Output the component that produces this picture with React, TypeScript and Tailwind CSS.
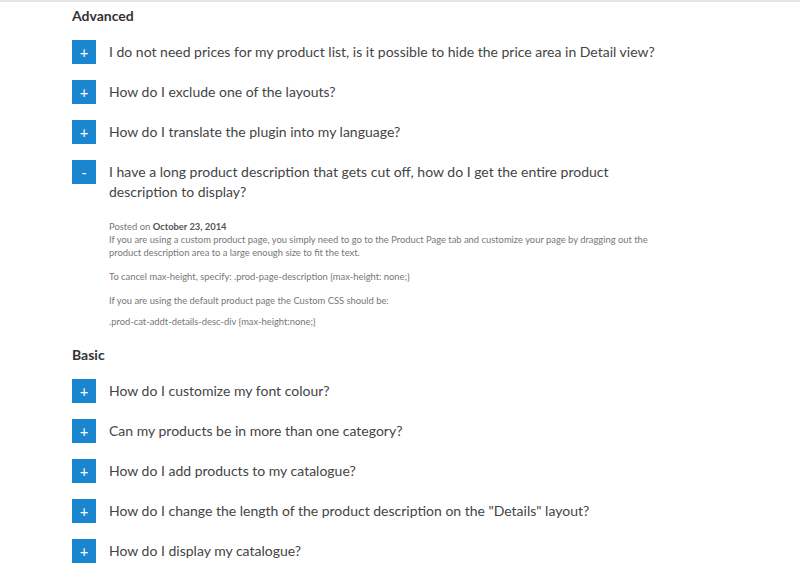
import { useState } from 'react'

type Faq = { q: string; open?: boolean }

const advanced: Faq[] = [
  { q: 'I do not need prices for my product list, is it possible to hide the price area in Detail view?' },
  { q: 'How do I exclude one of the layouts?' },
  { q: 'How do I translate the plugin into my language?' },
  {
    q: 'I have a long product description that gets cut off, how do I get the entire product description to display?',
    open: true,
  },
]

const basic: Faq[] = [
  { q: 'How do I customize my font colour?' },
  { q: 'Can my products be in more than one category?' },
  { q: 'How do I add products to my catalogue?' },
  { q: 'How do I change the length of the product description on the "Details" layout?' },
  { q: 'How do I display my catalogue?' },
]

export default function App() {
  return (
    <div className="min-h-[578px] border-t-2 border-[#e6e6e6] bg-white font-['Lato',sans-serif] text-[#444]">
      <div className="px-[72px] pt-[4px]">
        <h2 className="text-[14px] leading-[20px] font-bold text-[#333]">Advanced</h2>
        <FaqList items={advanced} />
        <h2 className="mt-[17px] text-[14px] leading-[20px] font-bold text-[#333]">Basic</h2>
        <FaqList items={basic} />
      </div>
    </div>
  )
}

const FaqList = ({ items }: { items: Faq[] }) => {
  return (
    <div className="mt-[14px] space-y-[16px]">
      {items.map((item) => (
        <FaqItem key={item.q} item={item} />
      ))}
    </div>
  )
}

const FaqItem = ({ item }: { item: Faq }) => {
  const [open, setOpen] = useState(!!item.open)
  return (
    <div>
      <button className="flex items-start gap-[13px] text-left" onClick={() => setOpen(!open)}>
        <span className="flex h-[24px] w-[24px] shrink-0 items-center justify-center bg-[#1a86cf] text-[15px] leading-none text-white">
          {open ? '-' : '+'}
        </span>
        <span className="w-[550px] pt-[2px] text-[14px] leading-[20px]">{item.q}</span>
      </button>
      {open && (
        <div className="mt-[18px] w-[587px] pl-[37px] text-[9.4px] leading-[13px] text-[#777]">
          <p>
            Posted on <span className="font-bold text-[#555]">October 23, 2014</span>
          </p>
          <p>
            If you are using a custom product page, you simply need to go to the Product Page tab and customize
            your page by dragging out the product description area to a large enough size to fit the text.
          </p>
          <p className="mt-[11px]">To cancel max-height, specify: .prod-page-description {'{max-height: none;}'}</p>
          <p className="mt-[11px]">If you are using the default product page the Custom CSS should be:</p>
          <p className="mt-[8px]">.prod-cat-addt-details-desc-div {'{max-height:none;}'}</p>
        </div>
      )}
    </div>
  )
}
